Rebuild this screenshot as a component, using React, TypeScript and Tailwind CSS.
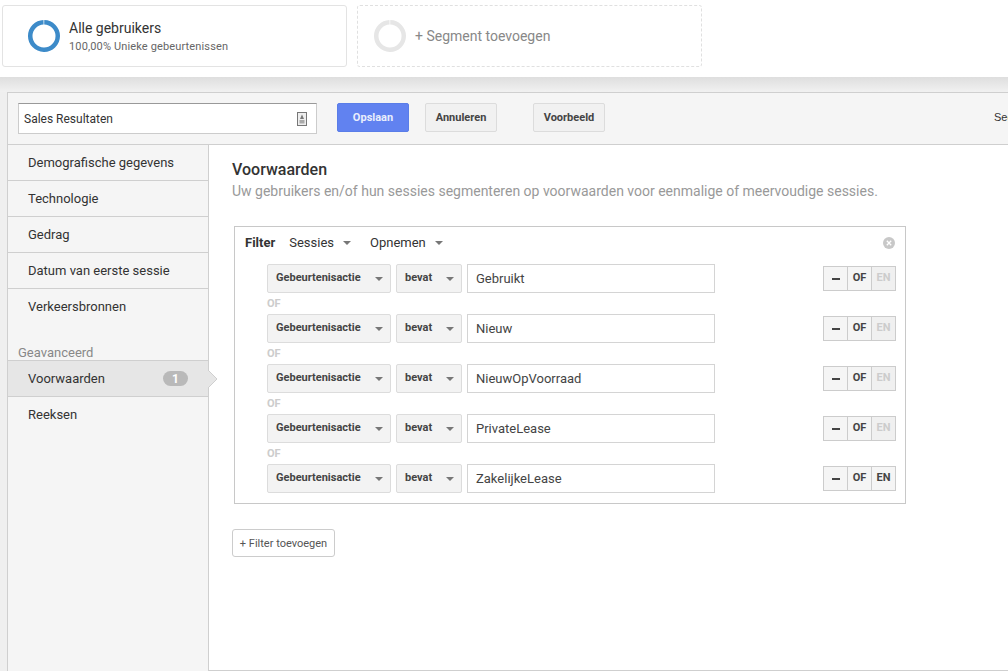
const sideTop = ['Demografische gegevens', 'Technologie', 'Gedrag', 'Datum van eerste sessie', 'Verkeersbronnen']

const rows = [
  { value: 'Gebruikt', en: false },
  { value: 'Nieuw', en: false },
  { value: 'NieuwOpVoorraad', en: false },
  { value: 'PrivateLease', en: false },
  { value: 'ZakelijkeLease', en: true },
]

function Caret({ className = '' }: { className?: string }) {
  return <span className={`block w-0 h-0 border-x-[4px] border-x-transparent border-t-[4px] border-t-[#777] ${className}`} />
}

function Ring({ color }: { color: string }) {
  return (
    <svg width="32" height="32" viewBox="0 0 32 32" className="shrink-0">
      <circle cx="16" cy="16" r="13.75" fill="none" stroke={color} strokeWidth="4.5" strokeDasharray="85.1 1.3" transform="rotate(-89 16 16)" />
    </svg>
  )
}

function RuleRow({ value, en }: { value: string; en: boolean }) {
  return (
    <div className="flex h-[29px] items-stretch">
      <div className="w-[124px] h-[29px] bg-[#f3f3f3] border border-[#dcdcdc] rounded-[2px] flex items-start justify-between pl-2 pr-[7px] pt-[5px]">
        <span className="text-[11px] font-bold text-[#444] leading-[16px]">Gebeurtenisactie</span>
        <Caret className="mt-[7px]" />
      </div>
      <div className="w-[66px] h-[29px] ml-[5px] bg-[#f3f3f3] border border-[#dcdcdc] rounded-[2px] flex items-start justify-between pl-2 pr-[7px] pt-[5px]">
        <span className="text-[11px] font-bold text-[#444] leading-[16px]">bevat</span>
        <Caret className="mt-[7px]" />
      </div>
      <div className="w-[248px] h-[29px] ml-[5px] bg-white border border-[#d4d4d4] flex items-center pl-[8px] text-[13px] text-[#444]">
        {value}
      </div>
      <div className="ml-[108px] mt-[2px] h-[25px] w-[73px] flex border border-[#ccc] bg-[#f5f5f5] text-[11px] font-bold">
        <span className="w-[24px] flex items-center justify-center border-r border-[#ccc] text-[#444]">
          <span className="block w-[8px] h-[2px] bg-[#444]" />
        </span>
        <span className="w-[24px] flex items-center justify-center border-r border-[#ccc] text-[#444]">OF</span>
        <span className={`flex-1 flex items-center justify-center ${en ? 'text-[#444]' : 'text-[#ccc] bg-[#f0f0f0]'}`}>EN</span>
      </div>
    </div>
  )
}

export default function App() {
  return (
    <div className="w-[1008px] h-[671px] overflow-hidden bg-white font-['Roboto',sans-serif]">
      <div className="h-[77px] flex pl-[2px] pt-[5px] gap-[10px]">
        <div className="w-[345px] h-[62px] bg-white border border-[#e3e3e3] rounded-[3px] flex items-center pl-[25px]">
          <Ring color="#3d8bc9" />
          <div className="ml-[9px] pt-[1px]">
            <div className="text-[14px] leading-[17px] text-[#333]">Alle gebruikers</div>
            <div className="text-[11px] leading-[15px] mt-[2px] tracking-[0.14px] text-[#666]">100,00% Unieke gebeurtenissen</div>
          </div>
        </div>
        <div className="w-[345px] h-[62px] bg-white border border-dashed border-[#e0e0e0] rounded-[3px] flex items-center pl-[16px]">
          <Ring color="#e6e6e6" />
          <span className="ml-[9px] text-[14px] text-[#888]">+ Segment toevoegen</span>
        </div>
      </div>

      <div className="h-[594px] bg-[#efefef] bg-gradient-to-b from-[#dedede] to-[#f1f1f1] bg-[length:100%_15px] bg-no-repeat pt-[15px] pl-[7px]">
        <div className="h-[579px] border-t border-l border-b border-[#cfcfcf] bg-white">
          <div className="h-[52px] bg-[#f5f5f5] border-b border-[#cfcfcf] flex items-start pl-[10px] pt-[10px] relative overflow-hidden">
            <div className="w-[299px] h-[31px] bg-white border border-[#ccc] border-t-[#999] flex items-center justify-between pl-[5px] pr-[9px] text-[12px] text-[#333]">
              Sales Resultaten
              <svg width="10" height="14" viewBox="0 0 10 14">
                <rect x="0.5" y="0.5" width="9" height="13" fill="#eee" stroke="#777" />
                <path d="M5 2.5 L7 7 H3 Z" fill="#777" />
                <rect x="2.5" y="8" width="5" height="3.5" fill="#aaa" />
              </svg>
            </div>
            <button className="ml-[20px] w-[72px] h-[29px] pt-[1px] bg-[#6182f0] border border-[#5a7de8] rounded-[2px] text-[11px] font-bold text-[#e9eefc]">Opslaan</button>
            <button className="ml-[16px] w-[72px] h-[29px] pt-[1px] bg-[#f1f1f1] border border-[#dcdcdc] rounded-[2px] text-[11px] font-bold text-[#444]">Annuleren</button>
            <button className="ml-[36px] w-[72px] h-[29px] pt-[1px] bg-[#f1f1f1] border border-[#dcdcdc] rounded-[2px] text-[11px] font-bold text-[#444]">Voorbeeld</button>
            <span className="absolute left-[986px] top-[16px] text-[11px] text-[#333] font-['Liberation_Sans',sans-serif] whitespace-nowrap">Segment</span>
          </div>

          <div className="flex h-[526px]">
            <div className="w-[201px] shrink-0 bg-[#f5f5f5] border-r border-[#cfcfcf]">
              {sideTop.map((item, i) => (
                <div key={item} className={`h-[36px] flex items-center pl-[20px] text-[13px] text-[#333] ${i < sideTop.length - 1 ? 'border-b border-[#cfcfcf]' : ''}`}>
                  {item}
                </div>
              ))}
              <div className="h-[35px] pt-[20px] pl-[10px] text-[13px] leading-[15px] text-[#888]">Geavanceerd</div>
              <div className="relative h-[37px] bg-[#e6e6e6] border-y border-[#cfcfcf] flex items-center justify-between pl-[20px] pr-[20px] text-[13px] text-[#333]">
                Voorwaarden
                <span className="w-[25px] h-[15px] rounded-full bg-[#b9b9b9] text-[12px] font-bold text-white flex items-center justify-center">1</span>
                <svg width="10" height="20" viewBox="0 0 10 20" className="absolute left-[200px] top-[8px]">
                  <path d="M0 1 L9 10 L0 19 Z" fill="#e6e6e6" />
                  <path d="M0 1 L9 10 L0 19" fill="none" stroke="#cfcfcf" />
                </svg>
              </div>
              <div className="h-[36px] flex items-center pl-[20px] text-[13px] text-[#333]">Reeksen</div>
            </div>

            <div className="flex-1 min-w-0 pl-[23px] pt-[15px]">
              <h2 className="text-[16px] leading-[20px] font-medium text-[#333]">Voorwaarden</h2>
              <p className="mt-[1px] text-[14px] leading-[20px] text-[#999] whitespace-nowrap">
                Uw gebruikers en/of hun sessies segmenteren op voorwaarden voor eenmalige of meervoudige sessies.
              </p>
              <div className="ml-[2px] mt-[25px] w-[672px] h-[278px] border border-[#c8c8c8]">
                <div className="h-[32px] mb-[5px] flex items-center pl-[10px] pr-[10px] text-[13px] text-[#333]">
                  <span className="font-bold">Filter</span>
                  <span className="ml-[14px]">Sessies</span>
                  <Caret className="ml-[9px]" />
                  <span className="ml-[19px]">Opnemen</span>
                  <Caret className="ml-[9px]" />
                  <svg width="12" height="12" viewBox="0 0 12 12" className="ml-auto">
                    <circle cx="6" cy="6" r="6" fill="#c8c8c8" />
                    <path d="M3.8 3.8 L8.2 8.2 M8.2 3.8 L3.8 8.2" stroke="#fff" strokeWidth="1.3" />
                  </svg>
                </div>
                <div className="pl-[32px]">
                  {rows.map((row, i) => (
                    <div key={row.value}>
                      <RuleRow value={row.value} en={row.en} />
                      {i < rows.length - 1 && (
                        <div className="h-[21px] pt-[3px] text-[11px] leading-[15px] font-bold text-[#ccc]">OF</div>
                      )}
                    </div>
                  ))}
                </div>
              </div>
              <button className="mt-[25px] h-[28px] w-[103px] pt-[2px] bg-white border border-[#ccc] rounded-[3px] text-[11px] text-[#555]">+ Filter toevoegen</button>
            </div>
          </div>
        </div>
      </div>
    </div>
  )
}
